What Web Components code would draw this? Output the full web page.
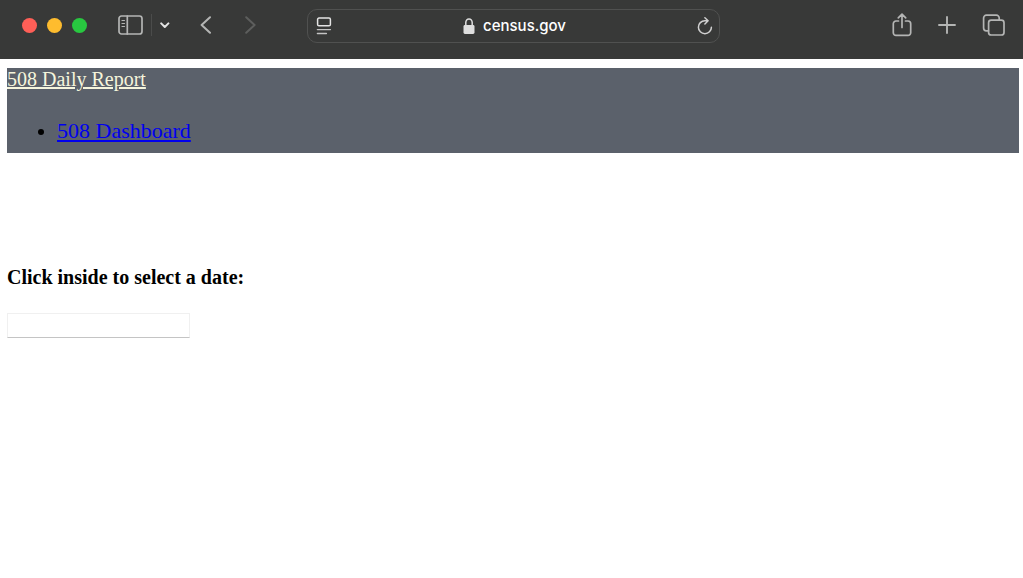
<!DOCTYPE html>
<html lang="en">
<head>
<meta charset="utf-8">
<meta name="viewport" content="width=device-width, initial-scale=1">
<title>508 Daily Report</title>
<style>
	body {
		margin: 0;
		background: #fff;
		color: #000;
		font-family: "Liberation Serif", "Times New Roman", serif;
		font-size: 20px;
	}
	main {
		padding: 9px 4px 0 7px;
	}
</style>
</head>
<body>
<browser-bar>census.gov</browser-bar>
<main>
	<report-nav txt-brand="508 Daily Report">
		<nav-item href="#dashboard">508 Dashboard</nav-item>
	</report-nav>
	<date-picker>Click inside to select a date:</date-picker>
</main>

<script>
const templateBar = document.createElement('template');
templateBar.innerHTML = `
	<style>
		:host {
			display: grid;
			grid-template-columns: 1fr minmax(0, 413px) 1fr;
			align-items: center;
			height: 59px;
			padding: 0 18px 7px 22px;
			box-sizing: border-box;
			background: #383938;
			color: #fff;
			font-family: Inter, "Liberation Sans", sans-serif;
			font-size: 15px;
			font-weight: 500;
		}
		.group, .lights, .sidebar {
			display: flex;
			align-items: center;
		}
		.group {
			padding-bottom: 2px;
		}
		.lights {
			gap: 10px;
			margin-right: 31px;
		}
		.light {
			width: 15px;
			height: 15px;
			border-radius: 50%;
		}
		.close { background: #ff5f57; }
		.minimize { background: #febc2e; }
		.zoom { background: #28c840; }
		.divider {
			width: 1px;
			height: 22px;
			margin: 0 8px;
			background: #4b4c4b;
		}
		.end {
			justify-content: flex-end;
			gap: 26px;
		}
		button {
			display: block;
			padding: 0;
			border: 0;
			background: none;
			color: #b4b5b4;
		}
		button:disabled { color: #5d5e5d; }
		.bright { color: #e4e4e4; }
		.back { margin-left: 30px; }
		.forward { margin-left: 32px; }
		svg {
			display: block;
			fill: none;
			stroke: currentColor;
			stroke-width: 1.7;
			stroke-linecap: round;
			stroke-linejoin: round;
		}
		.address {
			display: flex;
			align-items: center;
			justify-content: space-between;
			height: 34px;
			box-sizing: border-box;
			padding: 0 6px 0 8px;
			border: 1px solid #505150;
			border-radius: 10px;
		}
		.site {
			display: flex;
			align-items: center;
			gap: 8px;
			line-height: 20px;
		}
	</style>
	<div class="group">
		<div class="lights">
			<button class="light close" aria-label="Close"></button>
			<button class="light minimize" aria-label="Minimize"></button>
			<button class="light zoom" aria-label="Zoom"></button>
		</div>
		<div class="sidebar">
			<button aria-label="Show sidebar">
				<svg width="25" height="20" viewBox="0 0 25 20"><rect x="1" y="1" width="23" height="18" rx="2.5"/><path d="M9.3 1v18"/><path stroke-width="1.2" d="M4 5.5h2.5M4 8.5h2.5M4 11.5h2.5"/></svg>
			</button>
			<span class="divider"></span>
			<button class="bright" aria-label="Tab groups">
				<svg width="10" height="8" viewBox="0 0 10 8"><path stroke-width="2" d="M1.2 2.4 4.8 6l3.6-3.6"/></svg>
			</button>
		</div>
		<button class="back" aria-label="Back">
			<svg width="12" height="18" viewBox="0 0 12 18"><path stroke-width="2" d="M10 1.2 1.6 9l8.4 7.8"/></svg>
		</button>
		<button class="forward" aria-label="Forward" disabled>
			<svg width="12" height="18" viewBox="0 0 12 18"><path stroke-width="2" d="M2.2 1.2 10.6 9l-8.4 7.8"/></svg>
		</button>
	</div>
	<div class="address">
		<button class="bright" aria-label="Page menu">
			<svg width="17" height="18" viewBox="0 0 17 18"><rect x="1.6" y="1" width="12.8" height="7.8" rx="1.4" stroke-width="1.5"/><path stroke-width="1.4" stroke="#c4c4c4" d="M1.4 12.6h13M1.4 16.5h9"/></svg>
		</button>
		<div class="site">
			<svg width="12" height="16" viewBox="0 0 12 16"><path stroke="#dedede" stroke-width="1.5" d="M2.8 8V4.6a3.2 3.7 0 0 1 6.4 0V8"/><rect x=".5" y="7" width="11" height="9" rx="1.4" fill="#dedede" stroke="none"/></svg>
			<slot></slot>
		</div>
		<button class="bright" aria-label="Reload">
			<svg width="17" height="18" viewBox="0 0 17 18"><path stroke-width="1.5" stroke="#d0d0d0" d="M15.4 10.2a6.5 6.5 0 1 1-6.5-6.5h3M8.9.8l3.2 2.9-3.2 3.3"/></svg>
		</button>
	</div>
	<div class="group end">
		<button aria-label="Share">
			<svg width="20" height="24" viewBox="0 0 20 24"><path d="M6.5 8H4a2.7 2.7 0 0 0-2.7 2.7v9A2.7 2.7 0 0 0 4 22.4h12a2.7 2.7 0 0 0 2.7-2.7v-9A2.7 2.7 0 0 0 16 8h-2.5M10 14.5V1.3M6.3 4.8 10 1.1l3.7 3.7"/></svg>
		</button>
		<button aria-label="New tab">
			<svg width="18" height="18" viewBox="0 0 18 18"><path stroke-width="1.9" d="M1 9h16M9 1v16"/></svg>
		</button>
		<button aria-label="Show all tabs">
			<svg width="23" height="22" viewBox="0 0 23 22"><path d="M6.4 16.8H4.4A2.8 2.8 0 0 1 1.6 14V4a2.8 2.8 0 0 1 2.8-2.8h10A2.8 2.8 0 0 1 17.2 4v2"/><rect x="6.6" y="6.1" width="15.4" height="14.9" rx="2.6"/></svg>
		</button>
	</div>
	`;

class BrowserBar extends HTMLElement {
	constructor(){
		super();
		this.attachShadow({ mode: 'open'});
		this.shadowRoot.appendChild(templateBar.content.cloneNode(true));
	}
}

const templateNav = document.createElement('template');
templateNav.innerHTML = `
	<style>
		:host {
			display: block;
			background: #5b616b;
		}
		nav {
			padding-bottom: 10px;
		}
		.brand {
			display: block;
			color: beige;
			line-height: 22px;
		}
		.items {
			margin-top: 28px;
			padding-left: 50px;
			font-size: 22px;
			line-height: 25px;
		}
	</style>
	<nav>
		<a class="brand" href="#"></a>
		<div class="items" role="list"><slot></slot></div>
	</nav>
	`;

class ReportNav extends HTMLElement {
	constructor(){
		super();
		this.attachShadow({ mode: 'open'});
		this.shadowRoot.appendChild(templateNav.content.cloneNode(true));
		this.shadowRoot.querySelector('.brand').textContent = this.getAttribute('txt-brand');
	}
}

const templateItem = document.createElement('template');
templateItem.innerHTML = `
	<style>
		:host {
			display: list-item;
			list-style: disc;
		}
		:host::marker { font-size: 20px; }
		a { color: #0000ee; }
	</style>
	<a><slot></slot></a>
	`;

class NavItem extends HTMLElement {
	constructor(){
		super();
		this.attachShadow({ mode: 'open'});
		this.shadowRoot.appendChild(templateItem.content.cloneNode(true));
		this.shadowRoot.querySelector('a').href = this.getAttribute('href');
		this.setAttribute('role', 'listitem');
	}
}

const templateDate = document.createElement('template');
templateDate.innerHTML = `
	<style>
		:host {
			display: block;
			margin-top: 112px;
		}
		label {
			display: block;
			margin-bottom: 24px;
			font-weight: bold;
			line-height: 24px;
		}
		input {
			display: block;
			width: 183px;
			max-width: 100%;
			height: 25px;
			box-sizing: border-box;
			padding: 2px 4px;
			border: 1px solid #f0f0f0;
			border-bottom-color: #c4c4c4;
			background: #fff;
			font: inherit;
		}
	</style>
	<label for="date"><slot></slot></label>
	<input id="date" type="text" autocomplete="off">
	`;

class DatePicker extends HTMLElement {
	constructor(){
		super();
		this.attachShadow({ mode: 'open'});
		this.shadowRoot.appendChild(templateDate.content.cloneNode(true));
	}
}

window.customElements.define('browser-bar', BrowserBar);
window.customElements.define('report-nav', ReportNav);
window.customElements.define('nav-item', NavItem);
window.customElements.define('date-picker', DatePicker);
</script>
</body>
</html>
